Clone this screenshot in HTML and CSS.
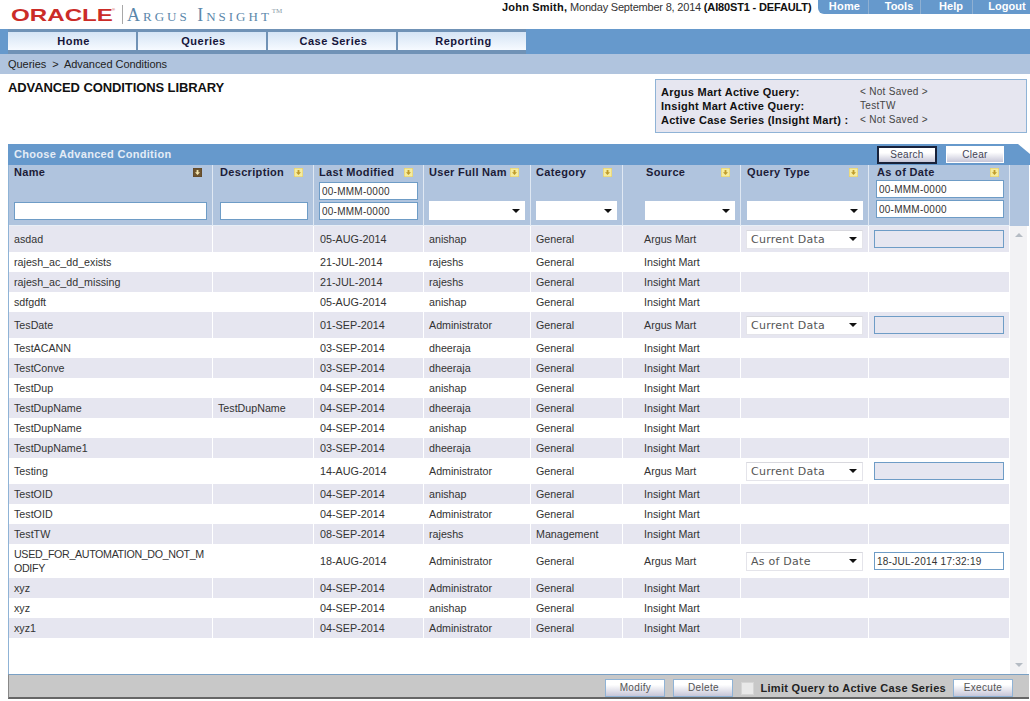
FILE: index.html
```html
<!DOCTYPE html>
<html lang="en">
<head>
<meta charset="utf-8">
<title>Advanced Conditions Library</title>
<link rel="stylesheet" href="styles.css">
</head>
<body>
<header class="top">
  <div class="logo"><span class="oracle">ORACLE</span><sup class="reg">®</sup><span class="logo-sep"></span><span class="product">Argus Insight<sup class="tm">TM</sup></span></div>
  <div class="user"><b>John Smith,</b> Monday September 8, 2014 <b class="server">(AI80ST1 - DEFAULT)</b></div>
  <nav class="tabs"><a>Home</a><a>Tools</a><a>Help</a><a>Logout</a></nav>
</header>
<nav class="mainnav">
  <div class="navstrip"><a>Home</a><a>Queries</a><a>Case Series</a><a>Reporting</a></div>
</nav>
<div class="crumb">Queries &nbsp;&gt;&nbsp; Advanced Conditions</div>
<section class="intro">
  <h1>ADVANCED CONDITIONS LIBRARY</h1>
  <dl class="active">
    <dt>Argus Mart Active Query:</dt><dd>&lt; Not Saved &gt;</dd>
    <dt>Insight Mart Active Query:</dt><dd>TestTW</dd>
    <dt>Active Case Series (Insight Mart) :</dt><dd>&lt; Not Saved &gt;</dd>
  </dl>
</section>
<section class="panel">
  <div class="panel-title"><span class="panel-name">Choose Advanced Condition</span><button class="btn focus">Search</button><button class="btn clear">Clear</button></div>
  <div class="grid-area">
    <table class="grid">
      <colgroup><col class="c1"><col class="c2"><col class="c3"><col class="c4"><col class="c5"><col class="c6"><col class="c7"><col class="c8"></colgroup>
      <thead>
        <tr>
          <th><div class="hd"><span>Name</span><svg class="sort dark" viewBox="0 0 9 9"><rect width="9" height="9"/><path d="M4.5 7 2 4.2h1.6V2h1.8v2.2H7z"/></svg></div><div class="filters"><input class="txt" type="text"></div></th>
          <th class="desc"><div class="hd"><span>Description</span><svg class="sort" viewBox="0 0 9 9"><rect width="9" height="9"/><path d="M4.5 7 2 4.2h1.6V2h1.8v2.2H7z"/></svg></div><div class="filters"><input class="txt" type="text"></div></th>
          <th><div class="hd"><span>Last Modified</span><svg class="sort" viewBox="0 0 9 9"><rect width="9" height="9"/><path d="M4.5 7 2 4.2h1.6V2h1.8v2.2H7z"/></svg></div><div class="filters"><input class="txt" type="text" value="00-MMM-0000"><input class="txt" type="text" value="00-MMM-0000"></div></th>
          <th class="ufn"><div class="hd"><span>User Full Nam</span><svg class="sort" viewBox="0 0 9 9"><rect width="9" height="9"/><path d="M4.5 7 2 4.2h1.6V2h1.8v2.2H7z"/></svg></div><div class="filters"><div class="sel"><span></span><i></i></div></div></th>
          <th><div class="hd"><span>Category</span><svg class="sort" viewBox="0 0 9 9"><rect width="9" height="9"/><path d="M4.5 7 2 4.2h1.6V2h1.8v2.2H7z"/></svg></div><div class="filters"><div class="sel"><span></span><i></i></div></div></th>
          <th class="src"><div class="hd"><span>Source</span><svg class="sort" viewBox="0 0 9 9"><rect width="9" height="9"/><path d="M4.5 7 2 4.2h1.6V2h1.8v2.2H7z"/></svg></div><div class="filters"><div class="sel"><span></span><i></i></div></div></th>
          <th class="qtype"><div class="hd"><span>Query Type</span><svg class="sort" viewBox="0 0 9 9"><rect width="9" height="9"/><path d="M4.5 7 2 4.2h1.6V2h1.8v2.2H7z"/></svg></div><div class="filters"><div class="sel"><span></span><i></i></div></div></th>
          <th class="asof"><div class="hd"><span>As of Date</span><svg class="sort" viewBox="0 0 9 9"><rect width="9" height="9"/><path d="M4.5 7 2 4.2h1.6V2h1.8v2.2H7z"/></svg></div><div class="filters"><input class="txt" type="text" value="00-MMM-0000"><input class="txt" type="text" value="00-MMM-0000"></div></th>
        </tr>
      </thead>
      <tbody>
        <tr class="tall"><td>asdad</td><td></td><td class="date">05-AUG-2014</td><td>anishap</td><td>General</td><td class="src">Argus Mart</td><td class="ctl"><div class="sel row"><span>Current Data</span><i></i></div></td><td class="ctl"><input class="txt dis" type="text"></td></tr>
        <tr><td>rajesh_ac_dd_exists</td><td></td><td class="date">21-JUL-2014</td><td>rajeshs</td><td>General</td><td class="src">Insight Mart</td><td></td><td></td></tr>
        <tr><td>rajesh_ac_dd_missing</td><td></td><td class="date">21-JUL-2014</td><td>rajeshs</td><td>General</td><td class="src">Insight Mart</td><td></td><td></td></tr>
        <tr><td>sdfgdft</td><td></td><td class="date">05-AUG-2014</td><td>anishap</td><td>General</td><td class="src">Insight Mart</td><td></td><td></td></tr>
        <tr class="tall"><td>TesDate</td><td></td><td class="date">01-SEP-2014</td><td>Administrator</td><td>General</td><td class="src">Argus Mart</td><td class="ctl"><div class="sel row"><span>Current Data</span><i></i></div></td><td class="ctl"><input class="txt dis" type="text"></td></tr>
        <tr><td>TestACANN</td><td></td><td class="date">03-SEP-2014</td><td>dheeraja</td><td>General</td><td class="src">Insight Mart</td><td></td><td></td></tr>
        <tr><td>TestConve</td><td></td><td class="date">03-SEP-2014</td><td>dheeraja</td><td>General</td><td class="src">Insight Mart</td><td></td><td></td></tr>
        <tr><td>TestDup</td><td></td><td class="date">04-SEP-2014</td><td>anishap</td><td>General</td><td class="src">Insight Mart</td><td></td><td></td></tr>
        <tr><td>TestDupName</td><td>TestDupName</td><td class="date">04-SEP-2014</td><td>dheeraja</td><td>General</td><td class="src">Insight Mart</td><td></td><td></td></tr>
        <tr><td>TestDupName</td><td></td><td class="date">04-SEP-2014</td><td>anishap</td><td>General</td><td class="src">Insight Mart</td><td></td><td></td></tr>
        <tr><td>TestDupName1</td><td></td><td class="date">03-SEP-2014</td><td>dheeraja</td><td>General</td><td class="src">Insight Mart</td><td></td><td></td></tr>
        <tr class="tall"><td>Testing</td><td></td><td class="date">14-AUG-2014</td><td>Administrator</td><td>General</td><td class="src">Argus Mart</td><td class="ctl"><div class="sel row"><span>Current Data</span><i></i></div></td><td class="ctl"><input class="txt dis" type="text"></td></tr>
        <tr><td>TestOID</td><td></td><td class="date">04-SEP-2014</td><td>anishap</td><td>General</td><td class="src">Insight Mart</td><td></td><td></td></tr>
        <tr><td>TestOID</td><td></td><td class="date">04-SEP-2014</td><td>Administrator</td><td>General</td><td class="src">Insight Mart</td><td></td><td></td></tr>
        <tr><td>TestTW</td><td></td><td class="date">08-SEP-2014</td><td>rajeshs</td><td>Management</td><td class="src">Insight Mart</td><td></td><td></td></tr>
        <tr class="wrap"><td class="longname">USED_FOR_AUTOMATION_DO_NOT_MODIFY</td><td></td><td class="date">18-AUG-2014</td><td>Administrator</td><td>General</td><td class="src">Argus Mart</td><td class="ctl"><div class="sel row"><span>As of Date</span><i></i></div></td><td class="ctl"><input class="txt val" type="text" value="18-JUL-2014 17:32:19"></td></tr>
        <tr><td>xyz</td><td></td><td class="date">04-SEP-2014</td><td>Administrator</td><td>General</td><td class="src">Insight Mart</td><td></td><td></td></tr>
        <tr><td>xyz</td><td></td><td class="date">04-SEP-2014</td><td>anishap</td><td>General</td><td class="src">Insight Mart</td><td></td><td></td></tr>
        <tr><td>xyz1</td><td></td><td class="date">04-SEP-2014</td><td>Administrator</td><td>General</td><td class="src">Insight Mart</td><td></td><td></td></tr>
      </tbody>
    </table>
    <div class="scroll">
      <div class="scroll-head"></div>
      <div class="scroll-track"><i class="arrow up"></i><i class="arrow down"></i></div>
    </div>
  </div>
  <footer class="actions">
    <button class="btn">Modify</button>
    <button class="btn">Delete</button>
    <label class="limit"><span class="check"></span>Limit Query to Active Case Series</label>
    <button class="btn exec">Execute</button>
  </footer>
</section>
</body>
</html>
```
FILE: styles.css
```css
* { box-sizing: border-box; }
html, body { margin: 0; padding: 0; }
body { width: 1030px; height: 701px; overflow: hidden; background: #fff; font: 11px "Liberation Sans", Arial, sans-serif; color: #222; }

.top { display: flex; height: 29px; align-items: flex-start; }
.logo { width: 496px; display: flex; align-items: flex-start; padding: 7px 0 0 11px; height: 29px; }
.oracle { font: bold 17px/16px "Liberation Sans", Arial, sans-serif; margin-top: 1px; color: #cb2c28; width: 101px; white-space: nowrap; transform: scaleX(1.42); transform-origin: left center; }
.reg { font-size: 4px; line-height: 6px; color: #cb2c28; width: 0; margin: 0; vertical-align: baseline; }
.logo-sep { width: 1px; height: 19px; background: #a8a8a8; margin: -2px 4px 0 10px; }
.product { font: 18px/17px "Liberation Serif", "Times New Roman", serif; font-variant: small-caps; letter-spacing: 3px; color: #5b87ab; white-space: nowrap; }
.product .tm { font-size: 7px; letter-spacing: 0; line-height: 0; color: #8a9aa8; vertical-align: 8px; }
.user { width: 322px; padding: 1px 0 0 6px; white-space: nowrap; font-size: 11px; line-height: 13px; color: #333; letter-spacing: -.2px; }
.user b { color: #111; letter-spacing: .2px; }
.user b.server { letter-spacing: -.15px; }
.tabs { width: 212px; height: 14px; background: #6699cc; border-bottom-left-radius: 6px; display: flex; }
.tabs a { width: 52px; text-align: center; font-weight: bold; font-size: 11px; line-height: 12px; color: #fff; border-right: 1px solid #8fb0d2; padding-left: 9px; }
.tabs a:first-child { width: 51px; padding-left: 3px; letter-spacing: .2px; }
.tabs a:last-child { border-right: 0; width: 57px; padding-left: 11px; }

.mainnav { height: 25px; background: #6699cc; padding-left: 8px; display: flex; }
.navstrip { display: flex; gap: 2px; height: 25px; background: #7092b6; padding: 3px 0 4px; }
.navstrip a { width: 128px; padding-left: 3px; background: linear-gradient(#d5e4f5, #f6faff); text-align: center; font-weight: bold; font-size: 11px; line-height: 19px; letter-spacing: .5px; color: #15153a; }

.crumb { height: 20px; background: #b0c4de; padding-left: 8px; line-height: 20px; color: #222; letter-spacing: -.05px; }

.intro { display: flex; justify-content: space-between; height: 70px; padding: 5px 3px 0 8px; }
h1 { margin: 1px 0 0; font-size: 13px; line-height: 16px; font-weight: bold; color: #111; letter-spacing: -.1px; }
.active { margin: 0; width: 372px; height: 54px; background: #e6e6f0; border: 1px solid #8fb3d6; padding: 5px 5px; display: grid; grid-template-columns: 199px 1fr; grid-auto-rows: 14px; line-height: 14px; }
.active dt { font-weight: bold; color: #111; font-size: 11px; letter-spacing: .27px; white-space: nowrap; }
.active dd { margin: 0; font-size: 10px; color: #444; letter-spacing: .3px; }

.panel { margin-left: 8px; width: 1021px; height: 555px; display: flex; flex-direction: column; }
.panel-title { height: 21px; margin-right: -1px; background: #6699cc; display: flex; align-items: flex-start; padding: 2px 24px 0 6px; clip-path: polygon(0 0, 1010px 0, 1022px 10px, 1022px 21px, 0 21px); }
.panel-name { color: #e4ecf6; font-weight: bold; letter-spacing: .3px; line-height: 16px; width: 863px; }
.btn { font: 10px "Liberation Sans", Arial, sans-serif; letter-spacing: .3px; color: #445; width: 60px; height: 18px; padding: 0 0 2px; border: 1px solid #a9c4dd; background: linear-gradient(#fff 35%, #c6c6d8); }
.btn.focus { width: 60px; border: 2px solid #18223a; padding-bottom: 1px; }
.btn.clear { width: 58px; height: 17px; margin-left: 9px; border-color: #fff; padding-bottom: 0; }

.grid-area { flex: 1; min-height: 0; display: flex; border-left: 1px solid #8fb3d6; background: #fff; overflow: hidden; }
.grid { width: 1001px; border-collapse: separate; border-spacing: 0; table-layout: fixed; align-self: flex-start; }
.c1 { width: 204px; } .c2 { width: 101px; } .c3 { width: 110px; } .c4 { width: 107px; }
.c5 { width: 92px; } .c6 { width: 118px; } .c7 { width: 128px; } .c8 { width: 141px; }

th { height: 61px; padding: 0 5px; background: #b0c4de; border-right: 1px solid #dfe8f3; border-bottom: 1px solid #e8eef6; vertical-align: top; text-align: left; }
th.desc { padding-left: 7px; }
th.ufn .hd { padding-right: 6px; letter-spacing: .3px; }
th.src { padding-left: 22px; }
th.src .hd { padding-left: 1px; }
th.qtype { padding-left: 6px; }
th.asof { padding-left: 7px; }
th.asof .hd { padding-left: 1px; }
th.asof .filters { padding-bottom: 5px; }
.hd { display: flex; justify-content: space-between; align-items: center; height: 14px; margin-bottom: 1px; font-weight: bold; font-size: 11px; letter-spacing: .33px; color: #1c1c38; white-space: nowrap; padding-right: 5px; }
.sort { width: 9px; height: 9px; flex: none; }
.sort rect { fill: #f6ec9e; stroke: #e0c860; stroke-width: 1; }
.sort path { fill: #bf9c2c; }
.sort.dark rect { fill: #6e5530; stroke: #5a4526; }
.sort.dark path { fill: #f3e6b0; }
.filters { height: 43px; display: flex; flex-direction: column; justify-content: flex-end; gap: 2px; padding-bottom: 3px; }
.txt { display: block; width: 100%; height: 18px; margin: 0; padding: 0 2px; border: 1px solid #6e9cc6; background: #fff; font: 10px "Liberation Sans", Arial, sans-serif; letter-spacing: .25px; color: #333; outline: 0; }
.sel { height: 19px; width: 100%; background: #fff; display: flex; align-items: center; justify-content: space-between; padding: 0 5px; font: 11px "DejaVu Sans", Verdana, sans-serif; color: #555; }
.sel i { width: 0; height: 0; border: 4px solid transparent; border-top: 4px solid #111; border-bottom: 0; }
.sel.row { border: 1px solid #e4e4ea; border-top-color: #d8d8de; padding-left: 4px; }
.sel.row span { letter-spacing: .25px; font-size: 11px; }

td { height: 20px; padding: 0 5px; font-size: 10.7px; line-height: 14px; color: #333; border-right: 1px solid #fff; overflow-wrap: anywhere; vertical-align: middle; white-space: normal; }
td.date { padding-left: 6px; font-size: 10.8px; }
td.src { padding-left: 21px; }
td.longname { word-break: break-all; letter-spacing: -.35px; }
tbody tr:nth-child(odd) td { background: #e6e6f0; }
tr.tall td { height: 26px; }
tr.wrap td { height: 34px; }
.txt.dis { background: #e6e6f0; width: 130px; }
.txt.val { width: 130px; }

.scroll { flex: 1; display: flex; flex-direction: column; }
.scroll-head { height: 61px; background: #b0c4de; }
.scroll-track { flex: 1; background: #f2f2f4; display: flex; flex-direction: column; justify-content: space-between; align-items: center; padding: 7px 0 7px; margin-right: 2px; }
.arrow { width: 0; height: 0; border: 4px solid transparent; }
.arrow.up { border-top: 0; border-bottom: 4px solid #b5bcc4; }
.arrow.down { border-bottom: 0; border-top: 4px solid #b5bcc4; }

.actions { height: 25px; background: #c8c8c8; border-top: 1px solid #7aa0c4; border-bottom: 2px solid #666; border-left: 1px solid #888; display: flex; align-items: flex-start; justify-content: flex-end; padding: 4px 16px 0 0; }
.actions .btn { margin-left: 8px; background: linear-gradient(#fff 30%, #c6c6d8); border-color: #8fb3d6; color: #555; letter-spacing: .35px; }
.actions .btn.exec { margin-left: 7px; }
.limit { margin-left: 8px; height: 18px; display: flex; align-items: center; gap: 6px; font-weight: bold; color: #222; letter-spacing: .3px; white-space: nowrap; }
.check { width: 13px; height: 13px; background: #e9e9e9; border: 1px solid #d5d5d5; }
```
